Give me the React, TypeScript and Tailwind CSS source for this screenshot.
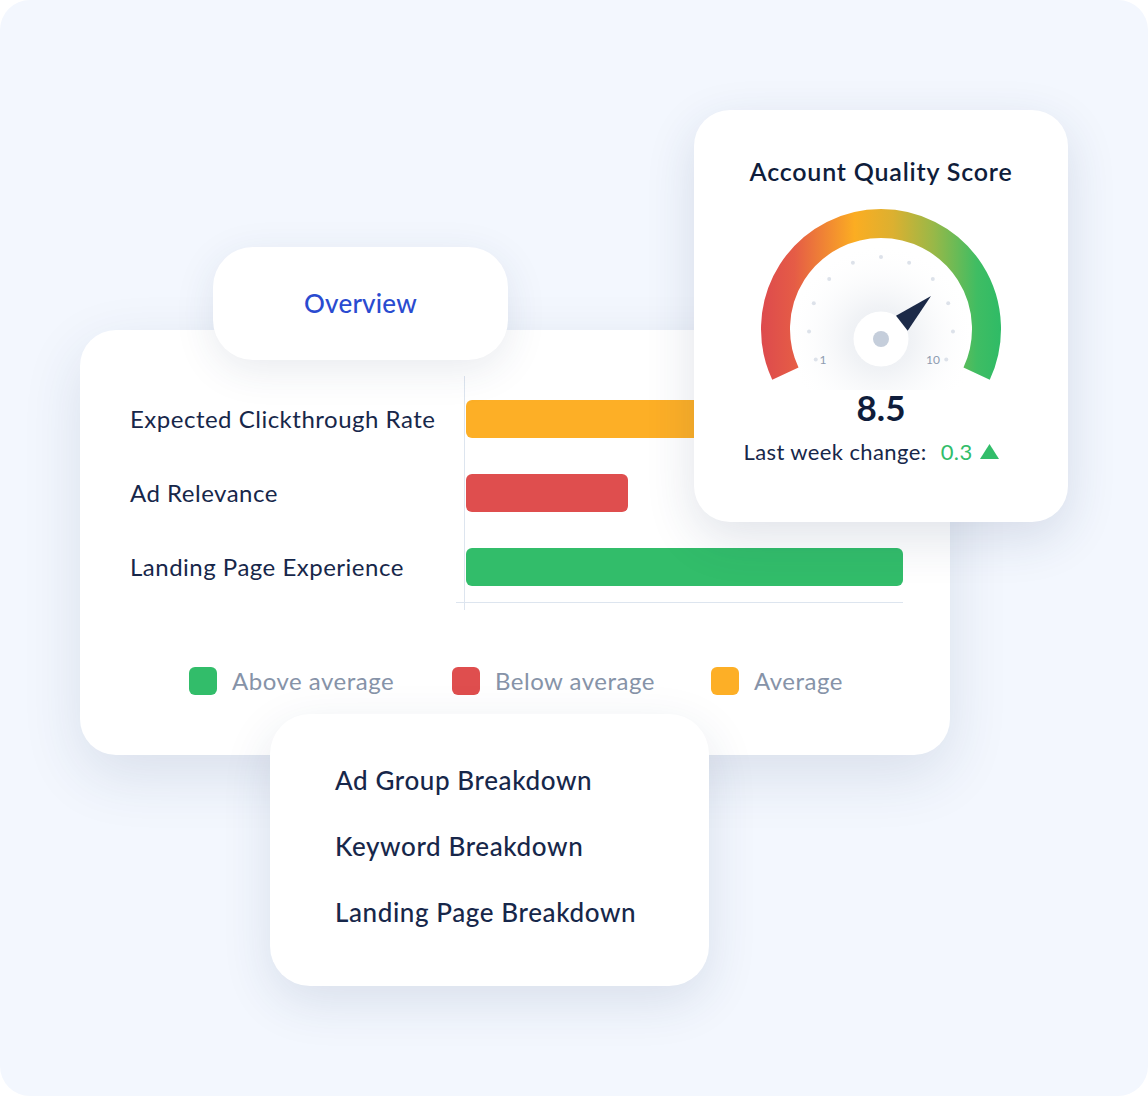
import React from "react";

const FONT = { fontFamily: "Lato, 'Open Sans', sans-serif" };

const ROWS = [
  { label: "Expected Clickthrough Rate", w: 330, color: "bg-[#fdaf26]" },
  { label: "Ad Relevance", w: 162, color: "bg-[#df4e4e]" },
  { label: "Landing Page Experience", w: 437, color: "bg-[#32bd6a]" },
];

const LEGEND = [
  { label: "Above average", color: "bg-[#32bd6a]", w: "w-[263px]" },
  { label: "Below average", color: "bg-[#df4e4e]", w: "w-[259px]" },
  { label: "Average", color: "bg-[#fdaf26]", w: "w-auto" },
];

function Gauge() {
  const cx = 130;
  const cy = 129;
  const R = 105.5;
  const pt = (deg: number, r: number) => {
    const a = (deg * Math.PI) / 180;
    return [cx + r * Math.cos(a), cy - r * Math.sin(a)];
  };
  const [sx, sy] = pt(205, R);
  const [ex, ey] = pt(-25, R);
  const ticks = Array.from({ length: 11 }, (_, i) => pt(205 - i * 23, 72));

  return (
    <svg width="260" height="190" viewBox="0 0 260 190">
      <defs>
        <linearGradient id="arc" gradientUnits="userSpaceOnUse" x1="10" y1="0" x2="250" y2="0">
          <stop offset="0" stopColor="#dd4a4d" />
          <stop offset="0.14" stopColor="#e55c46" />
          <stop offset="0.39" stopColor="#fbad22" />
          <stop offset="0.55" stopColor="#dcb030" />
          <stop offset="0.72" stopColor="#98b848" />
          <stop offset="0.9" stopColor="#3fbd63" />
          <stop offset="1" stopColor="#2fbb66" />
        </linearGradient>
        <radialGradient id="halo" cx="0.5" cy="0.5" r="0.5">
          <stop offset="0" stopColor="#e6e9ef" />
          <stop offset="0.35" stopColor="#f1f3f6" />
          <stop offset="1" stopColor="#ffffff" stopOpacity="0" />
        </radialGradient>
      </defs>
      <circle cx={cx} cy={139} r={95} fill="url(#halo)" />
      <path
        d={`M ${sx} ${sy} A ${R} ${R} 0 1 1 ${ex} ${ey}`}
        fill="none"
        stroke="url(#arc)"
        strokeWidth="29"
      />
      {ticks.map(([x, y], i) => (
        <circle key={i} cx={x} cy={y} r="2" fill="#dde2ea" />
      ))}
      <text x="72" y="164" fontSize="12" fill="#8e9bb0" textAnchor="middle" style={FONT}>
        1
      </text>
      <text x="182" y="164" fontSize="12" fill="#8e9bb0" textAnchor="middle" style={FONT}>
        10
      </text>
      <circle cx={cx} cy={139} r="27.5" fill="#ffffff" />
      <circle cx={cx} cy={139} r="8" fill="#c5cedb" />
      <polygon points="145,115.7 156.7,130.7 180,96" fill="#1c2a48" />
    </svg>
  );
}

export default function App() {
  return (
    <div className="w-[1148px] h-[1096px] bg-white" style={FONT}>
      <div className="relative w-full h-full rounded-[30px] bg-[#f3f7fe] overflow-hidden">
        {/* main overview card */}
        <div className="absolute left-[80px] top-[330px] w-[870px] h-[425px] rounded-[36px] bg-white shadow-[0_20px_60px_rgba(36,56,99,0.12)] pt-[46px]">
          <div className="flex">
            <div className="w-[384px] pl-[50px] pt-[24px] flex flex-col gap-[36px]">
              {ROWS.map((r) => (
                <div
                  key={r.label}
                  className="h-[38px] flex items-center text-[24px] tracking-[0.5px] text-[#17274a] whitespace-nowrap"
                >
                  {r.label}
                </div>
              ))}
            </div>
            <div className="relative w-[439px] h-[227px] border-l border-b border-[#dde5ef] pt-[24px] pl-[1px] flex flex-col gap-[36px]">
              {ROWS.map((r) => (
                <div
                  key={r.label}
                  className={`h-[38px] rounded-[6px] ${r.color}`}
                  style={{ width: r.w }}
                />
              ))}
              <div className="absolute left-[-1px] bottom-[-8px] w-px h-[7px] bg-[#dde5ef]" />
              <div className="absolute left-[-9px] bottom-[-1px] w-[8px] h-px bg-[#dde5ef]" />
            </div>
          </div>
          <div className="flex items-center pl-[109px] mt-[60px]">
            {LEGEND.map((l) => (
              <div key={l.label} className={`flex items-center gap-[15px] ${l.w}`}>
                <div className={`w-[28px] h-[28px] rounded-[6px] ${l.color}`} />
                <span className="text-[24px] tracking-[0.5px] text-[#8693a8]">{l.label}</span>
              </div>
            ))}
          </div>
        </div>

        {/* overview tab */}
        <div className="absolute left-[213px] top-[247px] w-[295px] h-[113px] rounded-[40px] bg-white shadow-[0_10px_40px_rgba(36,56,99,0.10)] flex items-center justify-center">
          <span className="text-[26px] tracking-[0.2px] font-medium text-[#2a4bd0]">Overview</span>
        </div>

        {/* account quality score */}
        <div className="absolute left-[694px] top-[110px] w-[374px] h-[412px] rounded-[36px] bg-white shadow-[0_16px_50px_rgba(36,56,99,0.14)] flex flex-col items-center pt-[46px]">
          <div className="text-[25px] tracking-[0.8px] font-semibold text-[#0f1d3b] leading-[30px]">
            Account Quality Score
          </div>
          <div className="mt-[14px]">
            <Gauge />
          </div>
          <div className="text-[35px] font-bold text-[#0f1d3b] leading-[40px] -mt-[3px]">8.5</div>
          <div className="flex items-center mt-[8px] pr-[20px] text-[22px] tracking-[0.4px] text-[#17274a]">
            <span>Last week change:</span>
            <span className="ml-[14px] text-[#32bd6a]">0.3</span>
            <svg className="ml-[7px]" width="19" height="15" viewBox="0 0 19 15">
              <polygon points="9.5,0 19,15 0,15" fill="#32bd6a" />
            </svg>
          </div>
        </div>

        {/* breakdown card */}
        <div className="absolute left-[270px] top-[714px] w-[439px] h-[272px] rounded-[40px] bg-white shadow-[0_16px_50px_rgba(36,56,99,0.12)] pl-[65px] pt-[50px] flex flex-col gap-[34px]">
          {["Ad Group Breakdown", "Keyword Breakdown", "Landing Page Breakdown"].map((t) => (
            <div key={t} className="text-[26px] tracking-[0.6px] leading-[32px] font-medium text-[#17274a]">
              {t}
            </div>
          ))}
        </div>
      </div>
    </div>
  );
}
